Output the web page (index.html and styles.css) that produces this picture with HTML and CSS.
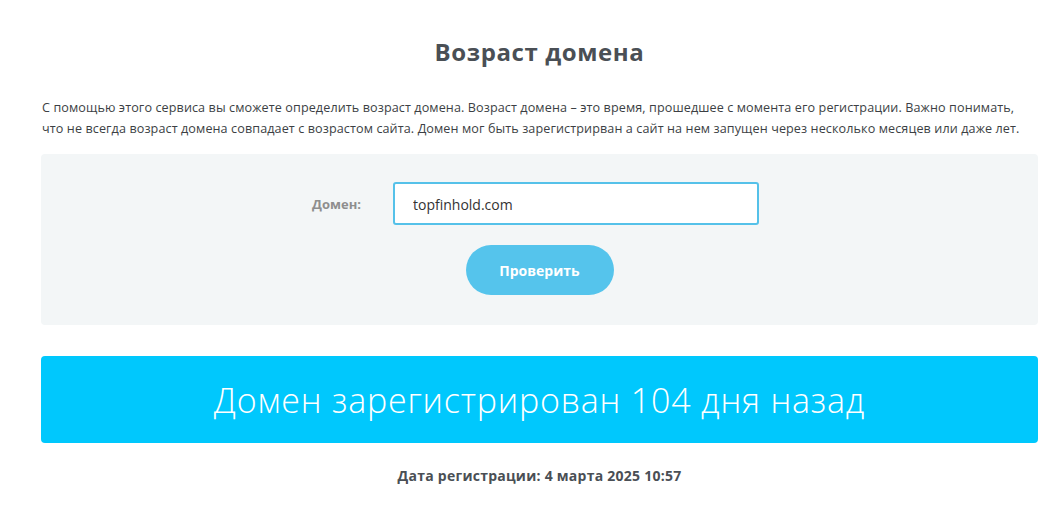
FILE: index.html
```html
<!DOCTYPE html>
<html lang="ru">
<head>
    <meta charset="UTF-8">
    <title>Возраст домена</title>
    <link rel="stylesheet" href="styles.css">
</head>
<body>
    <div class="page">
        <h1 class="title">Возраст домена</h1>
        <p class="intro">С помощью этого сервиса вы сможете определить возраст домена. Возраст домена – это время, прошедшее с момента его регистрации. Важно понимать, что не всегда возраст домена совпадает с возрастом сайта. Домен мог быть зарегистрирван а сайт на нем запущен через несколько месяцев или даже лет.</p>

        <form class="check-form" onsubmit="return false">
            <div class="form-row">
                <label class="form-label" for="domain">Домен:</label>
                <input class="form-input" id="domain" type="text" value="topfinhold.com">
            </div>
            <button class="btn-check" type="submit">Проверить</button>
        </form>

        <div class="result">Домен зарегистрирован 104 дня назад</div>
        <div class="reg-date">Дата регистрации: 4 марта 2025 10:57</div>
    </div>
</body>
</html>
```

FILE: styles.css
```css
* {
    margin: 0;
    padding: 0;
    box-sizing: border-box;
}

body {
    font-family: 'Open Sans', 'Noto Sans', sans-serif;
    background: #ffffff;
    color: #4a4f55;
}

.page {
    width: 997px;
    margin-left: 41px;
    padding-top: 35px;
}

.title {
    text-align: center;
    font-size: 24px;
    font-weight: 700;
    letter-spacing: 0.6px;
    line-height: 34px;
    color: #4a4f55;
}

.intro {
    margin-top: 28px;
    padding-left: 1px;
    font-size: 12.6px;
    letter-spacing: 0.1px;
    line-height: 21px;
    color: #3c3f44;
}

.check-form {
    margin-top: 15px;
    background: #f3f6f7;
    border-radius: 4px;
    height: 171px;
    padding-top: 28px;
    display: flex;
    flex-direction: column;
    align-items: center;
}

.form-row {
    display: flex;
    align-items: center;
    margin-left: -9px;
}

.form-label {
    width: 82px;
    font-size: 13px;
    font-weight: 700;
    color: #8e8e8e;
    padding-left: 1px;
}

.form-input {
    width: 366px;
    height: 43px;
    border: 2px solid #55c1e9;
    border-radius: 3px;
    padding: 1px 18px 0;
    font-family: inherit;
    font-size: 14px;
    color: #333333;
    outline: none;
}

.btn-check {
    margin-top: 20px;
    width: 148px;
    height: 50px;
    border: none;
    border-radius: 25px;
    background: #55c4ec;
    color: #ffffff;
    font-family: inherit;
    font-size: 14px;
    font-weight: 700;
    cursor: pointer;
}

.result {
    margin-top: 31px;
    height: 87px;
    border-radius: 4px;
    background: #00c8fd;
    color: #ffffff;
    font-size: 34px;
    font-weight: 300;
    letter-spacing: 0.8px;
    display: flex;
    align-items: center;
    justify-content: center;
}

.reg-date {
    margin-top: 23px;
    text-align: center;
    font-size: 14px;
    font-weight: 700;
    letter-spacing: 0.25px;
    color: #4a4f55;
}
```
